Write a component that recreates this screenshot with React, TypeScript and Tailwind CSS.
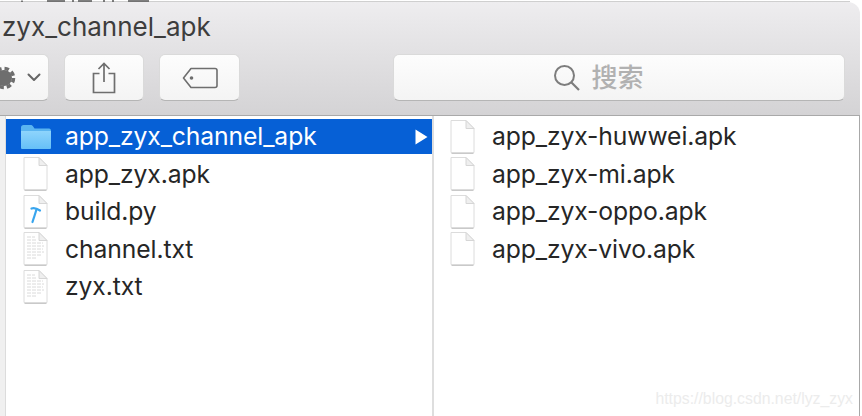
const font = { fontFamily: 'Inter, "Liberation Sans", "Noto Sans CJK SC", sans-serif' };

function Doc({ lines, hammer }: { lines?: boolean; hammer?: boolean }) {
  return (
    <svg width="26" height="36" viewBox="0 0 26 36" className="shrink-0">
      <path d="M2 1.5H17L25 9.5V33.5H2Z" fill="#fff" stroke="#dcdcdc" strokeWidth="1" />
      <path d="M17 1.5V9.5H25Z" fill="#efefef" stroke="#d6d6d6" strokeWidth="1" strokeLinejoin="round" />
      <path d="M2.5 34.5H24.5" stroke="#c9c9c9" strokeWidth="1" />
      {lines && (
        <g stroke="#dadada" strokeWidth="1">
          <path d="M5 6H13M5 9H14M5 12H21M5 15H22M5 18H21M5 21H22M5 24H19M5 27H14" strokeDasharray="4 1" />
        </g>
      )}
      {hammer && (
        <g stroke="#38a5ee" fill="none" strokeLinecap="round">
          <path d="M9.5 14.5C12 13.5 15 14.5 18 16.5" strokeWidth="2.2" />
          <path d="M14.5 15.5L10.5 28" strokeWidth="2.2" />
        </g>
      )}
    </svg>
  );
}

function Folder() {
  return (
    <svg width="32" height="26" viewBox="0 0 32 26" className="shrink-0">
      <defs>
        <linearGradient id="fg" x1="0" y1="0" x2="0" y2="1">
          <stop offset="0" stopColor="#8ed4fc" />
          <stop offset="1" stopColor="#66c0f7" />
        </linearGradient>
      </defs>
      <path d="M1 3.5C1 2 2 1 3.5 1H10.5C12 1 12.5 1.5 13.5 3L14.5 4.5H29C30.5 4.5 31 5.5 31 7V23.5C31 24.5 30 25 29 25H3C2 25 1 24.5 1 23.5Z" fill="#5ab4f0" />
      <path d="M1 7H31V23.5C31 24.5 30 25 29 25H3C2 25 1 24.5 1 23.5Z" fill="url(#fg)" />
    </svg>
  );
}

function Row({ name, kind, selected }: { name: string; kind?: 'lines' | 'hammer' | 'folder'; selected?: boolean }) {
  return (
    <div className={`flex items-center relative ${selected ? 'h-[35px] mb-[1.5px] bg-[#0660d6] text-white' : 'h-[37.5px] text-[#262626]'}`}>
      <div className={`w-[59px] shrink-0 flex justify-center ${kind === 'folder' ? '' : 'pr-[2px]'}`}>
        {kind === 'folder' ? <Folder /> : <Doc lines={kind === 'lines'} hammer={kind === 'hammer'} />}
      </div>
      <span className="text-[24.7px] leading-none whitespace-nowrap tracking-[-0.1px]">{name}</span>
      {selected && (
        <svg width="13" height="16" viewBox="0 0 13 16" className="absolute right-[4px] top-[10px]">
          <path d="M0.5 0.5L12.5 8L0.5 15.5Z" fill="#fff" />
        </svg>
      )}
    </div>
  );
}

function Btn({ className, children }: { className: string; children: React.ReactNode }) {
  return (
    <div className={`h-[47px] rounded-[6px] bg-gradient-to-b from-[#fdfdfd] to-[#f4f4f4] border border-[#dadada] border-b-[#b5b5b5] flex items-center justify-center shrink-0 ${className}`}>
      {children}
    </div>
  );
}

export default function App() {
  return (
    <div className="w-[862px] h-[416px] relative overflow-hidden bg-white" style={font}>
      <svg width="862" height="3" viewBox="0 0 862 3" className="absolute left-0 top-0">
        <path d="M0 1.5H850" stroke="#cfcfcf" strokeWidth="1" />
        <path d="M22 0.5V2M47 1H65M73 0V2M78 1H92M104 0V2M113 0V2M128 1H149" stroke="#555" strokeWidth="1.5" />
      </svg>
      <div className="absolute left-0 right-[2px] top-[2px] h-[114px] rounded-tr-[12px] bg-gradient-to-b from-[#eeedef] to-[#d4d3d5] border-b border-[#a9a9a9] flex flex-col">
        <div className="h-[50px] pl-[2px] flex items-center text-[26px] leading-none text-[#3d3d3d] whitespace-nowrap">
          <span>zyx_channel_apk</span>
        </div>
        <div className="flex items-start gap-[15px] mt-[2px]">
          <Btn className="w-[69px] ml-[-20px] pl-[6px] gap-[8px]">
            <svg width="24" height="24" viewBox="0 0 24 24">
              <circle cx="9" cy="12" r="8" fill="#6e6e6e" />
              <circle cx="9" cy="12" r="9.5" fill="none" stroke="#6e6e6e" strokeWidth="3.5" strokeDasharray="4.5 3" />
            </svg>
            <svg width="14" height="9" viewBox="0 0 14 9">
              <path d="M1.5 1.5L7 7L12.5 1.5" fill="none" stroke="#666" strokeWidth="2" strokeLinecap="round" strokeLinejoin="round" />
            </svg>
          </Btn>
          <Btn className="w-[80px]">
            <svg width="24" height="32" viewBox="0 0 24 32">
              <path d="M7.5 11.5H1.5V30.5H22.5V11.5H16.5M12 20V2M6.5 7L12 1.5L17.5 7" fill="none" stroke="#6e6e6e" strokeWidth="1.7" />
            </svg>
          </Btn>
          <Btn className="w-[81px]">
            <svg width="36" height="22" viewBox="0 0 36 22">
              <path d="M9 1.5H33C34 1.5 35 2.5 35 3.5V18.5C35 19.5 34 20.5 33 20.5H9L1.5 11Z" fill="none" stroke="#6e6e6e" strokeWidth="1.6" strokeLinejoin="round" />
              <circle cx="9.5" cy="11" r="1.8" fill="#6e6e6e" />
            </svg>
          </Btn>
          <div className="ml-[138px] w-[452px] h-[47px] rounded-[6px] bg-gradient-to-b from-[#fdfdfd] to-[#f4f4f4] border border-[#dadada] border-b-[#b5b5b5] flex items-center justify-center gap-[11px] pr-[41px]">
            <svg width="27" height="27" viewBox="0 0 27 27">
              <circle cx="11.5" cy="11.5" r="9.5" fill="none" stroke="#7d7d7d" strokeWidth="2" />
              <path d="M18.5 18.5L26 26" stroke="#7d7d7d" strokeWidth="2.2" />
            </svg>
            <span className="text-[26px] leading-none text-[#b1b1b1] font-medium">搜索</span>
          </div>
        </div>
      </div>

      <div className="absolute left-0 right-[2px] top-[116px] bottom-0 flex border-r border-[#a8a8a8]">
        <div className="w-[6px] bg-[#f0f0f0] border-r border-[#dcdcdc]" />
        <div className="w-[426px] pt-[3px]">
          <Row name="app_zyx_channel_apk" kind="folder" selected />
          <Row name="app_zyx.apk" />
          <Row name="build.py" kind="hammer" />
          <Row name="channel.txt" kind="lines" />
          <Row name="zyx.txt" kind="lines" />
        </div>
        <div className="w-[2px] bg-[#dedede]" />
        <div className="flex-1 pt-[2px]">
          <div className="-ml-[1px]">
            <Row name="app_zyx-huwwei.apk" />
            <Row name="app_zyx-mi.apk" />
            <Row name="app_zyx-oppo.apk" />
            <Row name="app_zyx-vivo.apk" />
          </div>
        </div>
      </div>

      <span className="absolute right-[9px] bottom-[9px] text-[15.8px] leading-none text-[#ececec] whitespace-nowrap" style={{ fontFamily: '"Liberation Sans", sans-serif' }}>
        https://blog.csdn.net/lyz_zyx
      </span>
    </div>
  );
}
